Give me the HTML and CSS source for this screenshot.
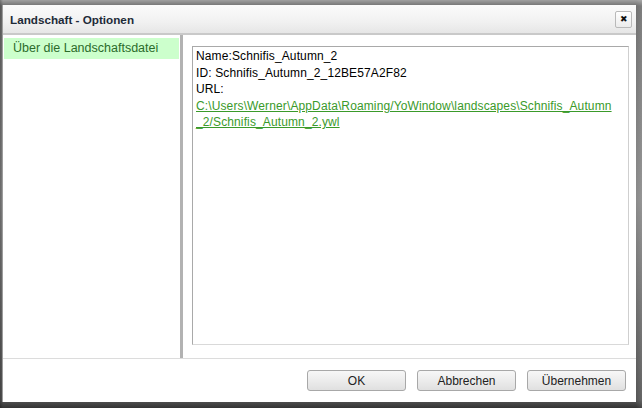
FILE: index.html
```html
<!DOCTYPE html>
<html>
<head>
<meta charset="utf-8">
<link rel="stylesheet" href="styles.css">
</head>
<body>
<div class="dialog">
  <div class="titlebar">
    <span class="title">Landschaft - Optionen</span>
    <span class="close">&#x2716;</span>
  </div>
  <div class="main">
    <div class="sidebar">
      <div class="item selected">Über die Landschaftsdatei</div>
    </div>
    <div class="divider"></div>
    <div class="content">
      <div class="box">
        <div>Name:Schnifis_Autumn_2</div>
        <div>ID: Schnifis_Autumn_2_12BE57A2F82</div>
        <div>URL:</div>
        <a class="link">C:\Users\Werner\AppData\Roaming/YoWindow\landscapes\Schnifis_Autumn<br>_2/Schnifis_Autumn_2.ywl</a>
      </div>
    </div>
  </div>
  <div class="footer">
    <button class="btn">OK</button>
    <button class="btn">Abbrechen</button>
    <button class="btn">Übernehmen</button>
  </div>
</div>
</body>
</html>
```
FILE: styles.css
```css
html, body {
  margin: 0;
  padding: 0;
}
body {
  width: 642px;
  height: 408px;
  overflow: hidden;
  font-family: "Liberation Sans", Arial, sans-serif;
  font-size: 12px;
  background:
    linear-gradient(90deg, rgba(0,0,0,0.25) 0px, rgba(0,0,0,0) 3px, rgba(0,0,0,0) 636px, rgba(255,255,255,0.1) 642px),
    linear-gradient(180deg, #a0a0a0 0px, #707070 6px, #8a8a8a 200px, #555555 400px, #333333 408px);
  padding: 5px 6px 6px 2px;
  box-sizing: border-box;
}
.dialog {
  width: 634px;
  height: 397px;
  background: #ffffff;
  display: flex;
  flex-direction: column;
  border-left: 1px solid #9c9c9c;
  box-sizing: border-box;
}
.titlebar {
  height: 28px;
  flex: none;
  display: flex;
  align-items: center;
  justify-content: space-between;
  padding: 0 4px 0 7px;
  background: linear-gradient(180deg, #fbfbfb 0%, #f1f1f1 60%, #e6e6e6 100%);
  border-bottom: 2px solid #c9c9c9;
}
.title {
  font-weight: bold;
  color: #1e2b38;
  font-size: 11.7px;
  margin-top: 1px;
}
.close {
  width: 15px;
  height: 15px;
  border: 1px solid #b9b9b9;
  border-radius: 2px;
  background: linear-gradient(180deg, #ffffff, #ececec);
  font-size: 9px;
  color: #111;
  display: flex;
  align-items: center;
  justify-content: center;
  line-height: 1;
  margin-top: 1px;
}
.main {
  flex: none;
  height: 323px;
  display: flex;
  border-bottom: 1px solid #dcdcdc;
}
.sidebar {
  width: 177px;
  padding: 3px 1px 0 1px;
  box-sizing: border-box;
  background: #ffffff;
}
.item {
  height: 21px;
  line-height: 21px;
  padding-left: 9px;
  font-size: 12.5px;
  color: #2b6b2b;
}
.item.selected {
  background: #ccffcc;
}
.divider {
  width: 3px;
  background: #b2b2b2;
}
.content {
  flex: 1;
  padding: 11px 7px 13px 9px;
  display: flex;
}
.box {
  flex: 1;
  border: 1px solid #a9a9a9;
  border-right-color: #cfcfcf;
  border-bottom-color: #d9d9d9;
  padding: 1px 3px;
  line-height: 16.6px;
  letter-spacing: 0.12px;
  color: #000;
}
.link {
  display: block;
  color: #3a9a2a;
  text-decoration: underline;
}
.footer {
  flex: 1;
  display: flex;
  justify-content: flex-end;
  align-items: flex-start;
  gap: 11px;
  padding: 11px 10px 0 0;
}
.btn {
  width: 99px;
  height: 21px;
  border: 1px solid #a8a8a8;
  border-radius: 3px;
  background: linear-gradient(180deg, #f7f7f7 0%, #ececec 50%, #e0e0e0 100%);
  font-family: "Liberation Sans", Arial, sans-serif;
  font-size: 12px;
  color: #222;
  padding: 0;
}
```
